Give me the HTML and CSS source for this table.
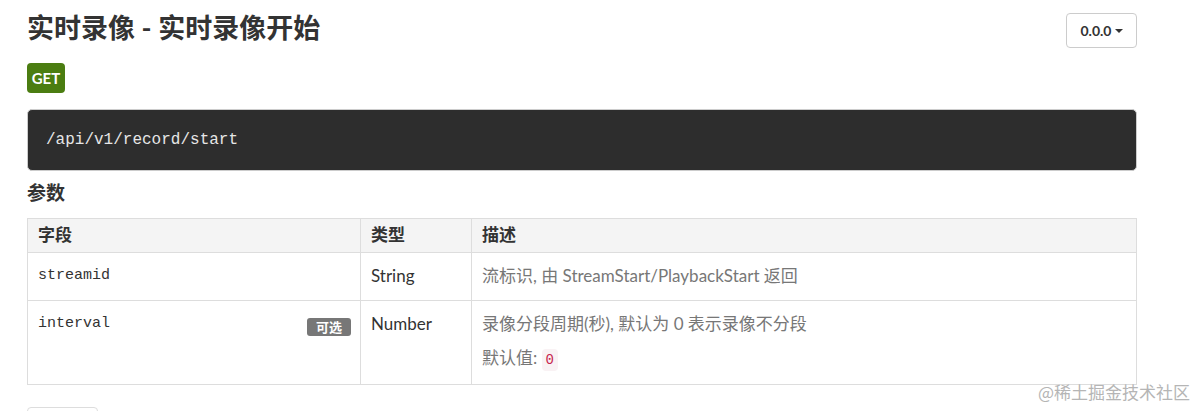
FILE: index.html
```html
<!DOCTYPE html>
<html lang="zh-CN">
<head>
<meta charset="utf-8">
<title>实时录像 - 实时录像开始</title>
<link rel="stylesheet" href="styles.css">
</head>
<body>
<div class="page">
  <div class="head">
    <h1 class="title">实时录像 - 实时录像开始</h1>
    <button class="version">0.0.0<span class="caret"></span></button>
  </div>
  <div class="method">GET</div>
  <pre class="endpoint">/api/v1/record/start</pre>
  <h2 class="section">参数</h2>
  <table class="params">
    <thead>
      <tr><th class="c-field">字段</th><th class="c-type">类型</th><th>描述</th></tr>
    </thead>
    <tbody>
      <tr>
        <td class="c-field"><div class="field"><code class="name">streamid</code></div></td>
        <td class="c-type">String</td>
        <td class="desc"><p>流标识, 由 StreamStart/PlaybackStart 返回</p></td>
      </tr>
      <tr>
        <td class="c-field"><div class="field"><code class="name">interval</code><span class="optional">可选</span></div></td>
        <td class="c-type">Number</td>
        <td class="desc"><p>录像分段周期(秒), 默认为 0 表示录像不分段</p><p>默认值: <code class="val">0</code></p></td>
      </tr>
    </tbody>
  </table>
  <div class="more"></div>
</div>
<div class="watermark">@稀土掘金技术社区</div>
</body>
</html>
```

FILE: styles.css
```css
html, body {
  margin: 0;
  padding: 0;
  background: #fff;
}
body {
  font-family: Lato, "Noto Sans CJK SC", sans-serif;
  color: #333;
  font-size: 17px;
  line-height: 1.5;
  overflow: hidden;
  height: 411px;
  position: relative;
}
.page {
  margin-left: 27px;
  width: 1110px;
}
.head {
  display: flex;
  justify-content: space-between;
  align-items: flex-start;
  padding-top: 13px;
}
.title {
  margin: 0;
  font-size: 27px;
  line-height: 30px;
  font-weight: 700;
  color: #333;
}
.version {
  width: 71px;
  height: 35px;
  border: 1px solid #ccc;
  border-radius: 4px;
  background: #fff;
  font-family: Lato, "Noto Sans CJK SC", sans-serif;
  font-size: 14px;
  font-weight: 700;
  color: #333;
  padding: 0;
  display: flex;
  align-items: center;
  justify-content: center;
  gap: 3px;
}
.caret {
  width: 0;
  height: 0;
  border-left: 4px solid transparent;
  border-right: 4px solid transparent;
  border-top: 4px solid #333;
}
.method {
  margin-top: 15px;
  width: 38px;
  height: 30px;
  border-radius: 4px;
  background: #4b7d11;
  color: #fff;
  font-weight: 700;
  font-size: 15px;
  line-height: 30px;
  text-align: center;
}
.endpoint {
  margin: 16px 0 0;
  height: 62px;
  box-sizing: border-box;
  background: #2d2d2d;
  border: 1px solid #ccc;
  border-radius: 5px;
  color: #e6e6e6;
  font-family: "Liberation Mono", monospace;
  font-size: 16px;
  line-height: 60px;
  padding: 0 18px;
}
.section {
  margin: 7px 0 0;
  font-size: 19px;
  line-height: 30px;
  font-weight: 700;
  color: #333;
}
.params {
  margin-top: 10px;
  width: 1110px;
  border-collapse: collapse;
  table-layout: fixed;
}
.params th, .params td {
  border: 1px solid #ddd;
  text-align: left;
  vertical-align: top;
}
.params th {
  background: #f4f4f4;
  font-weight: 700;
  padding: 4px 10px 5px;
  line-height: 24px;
}
.params td {
  padding: 11px 10px 12px;
  line-height: 24px;
}
.c-field { width: 312px; }
.c-type { width: 90px; }
.field {
  display: flex;
  justify-content: space-between;
  align-items: center;
  height: 24px;
}
.name {
  font-family: "Liberation Mono", monospace;
  font-size: 15px;
  color: #333;
}
.optional {
  background: #777;
  color: #fff;
  font-size: 13px;
  font-weight: 700;
  line-height: 18px;
  padding: 0 9px;
  border-radius: 3px;
  margin-top: 5px;
  margin-right: -1px;
}
.desc { color: #777; }
.desc p {
  margin: 0;
}
.desc p + p {
  margin-top: 10px;
}
.val {
  font-family: "Liberation Mono", monospace;
  font-size: 14px;
  color: #c7254e;
  background: #f9f2f4;
  border-radius: 4px;
  padding: 3px 4px;
}
.more {
  margin-top: 22px;
  width: 69px;
  height: 30px;
  border: 1px solid #ddd;
  border-radius: 4px;
}
.watermark {
  position: absolute;
  right: 8px;
  top: 380px;
  font-size: 17px;
  line-height: 24px;
  color: #b5b5b5;
  font-family: "Noto Sans CJK SC", sans-serif;
}
```
